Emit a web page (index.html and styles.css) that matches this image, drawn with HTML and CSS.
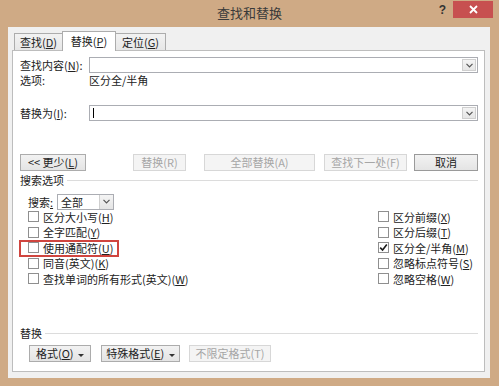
FILE: index.html
```html
<!DOCTYPE html>
<html>
<head>
    <meta charset="UTF-8">
    <title>查找和替换</title>
    <link rel="stylesheet" href="styles.css">
</head>
<body>
<div class="window">
    <div class="titlebar">
        <div></div>
        <div class="title">查找和替换</div>
        <div class="controls">
            <span class="help">?</span>
            <span class="close">
                <svg width="9" height="9" viewBox="0 0 9 9"><path d="M1 1 L8 8 M8 1 L1 8" stroke="#fff" stroke-width="1.8" fill="none"/></svg>
            </span>
        </div>
    </div>

    <div class="client">
        <div class="tabs">
            <div class="tab tab-find">查找(<u>D</u>)</div>
            <div class="tab tab-replace active">替换(<u>P</u>)</div>
            <div class="tab tab-goto">定位(<u>G</u>)</div>
        </div>

        <div class="panel">
            <div class="field-row">
                <span class="label">查找内容(<u>N</u>):</span>
                <div class="combo">
                    <span class="combo-arrow">
                        <svg width="7" height="5" viewBox="0 0 7 5"><path d="M0.5 0.8 L3.5 3.8 L6.5 0.8" stroke="#555" stroke-width="1.2" fill="none"/></svg>
                    </span>
                </div>
            </div>
            <div class="info-row">
                <span class="label">选项:</span>
                <span>区分全/半角</span>
            </div>
            <div class="field-row replace-row">
                <span class="label">替换为(<u>I</u>):</span>
                <div class="combo">
                    <span class="caret"></span>
                    <span class="combo-arrow">
                        <svg width="7" height="5" viewBox="0 0 7 5"><path d="M0.5 0.8 L3.5 3.8 L6.5 0.8" stroke="#555" stroke-width="1.2" fill="none"/></svg>
                    </span>
                </div>
            </div>

            <div class="button-row">
                <div class="btn btn-less">&lt;&lt; 更少(<u>L</u>)</div>
                <div class="btn disabled btn-replace">替换(R)</div>
                <div class="btn disabled btn-replace-all">全部替换(A)</div>
                <div class="btn disabled btn-next">查找下一处(F)</div>
                <div class="btn btn-cancel">取消</div>
            </div>

            <div class="group-head">
                <span>搜索选项</span>
                <span class="rule"></span>
            </div>

            <div class="search-row">
                <span>搜索<u>:</u></span>
                <div class="select">
                    <span class="select-text">全部</span>
                    <span class="select-arrow">
                        <svg width="7" height="5" viewBox="0 0 7 5"><path d="M0.5 0.8 L3.5 3.8 L6.5 0.8" stroke="#555" stroke-width="1.2" fill="none"/></svg>
                    </span>
                </div>
            </div>

            <div class="checks">
                <div class="check"><span class="box"></span>区分大小写(<u>H</u>)</div>
                <div class="check"><span class="box"></span>区分前缀(<u>X</u>)</div>
                <div class="check"><span class="box"></span>全字匹配(<u>Y</u>)</div>
                <div class="check"><span class="box"></span>区分后缀(<u>T</u>)</div>
                <div class="check marked"><span class="box"></span>使用通配符(<u>U</u>)</div>
                <div class="check"><span class="box checked"><svg width="9" height="9" viewBox="0 0 9 9"><path d="M1.2 4.6 L3.6 7 L7.8 1.6" stroke="#1a1a1a" stroke-width="1.6" fill="none"/></svg></span>区分全/半角(<u>M</u>)</div>
                <div class="check"><span class="box"></span>同音(英文)(<u>K</u>)</div>
                <div class="check"><span class="box"></span>忽略标点符号(<u>S</u>)</div>
                <div class="check"><span class="box"></span>查找单词的所有形式(英文)(<u>W</u>)</div>
                <div class="check"><span class="box"></span>忽略空格(<u>W</u>)</div>
            </div>

            <div class="bottom">
                <div class="group-head">
                    <span>替换</span>
                    <span class="rule"></span>
                </div>
                <div class="format-row">
                    <div class="btn btn-format">格式(<u>O</u>) <span class="drop"></span></div>
                    <div class="btn btn-special">特殊格式(<u>E</u>) <span class="drop"></span></div>
                    <div class="btn disabled btn-noformat">不限定格式(T)</div>
                </div>
            </div>
        </div>
    </div>
</div>
</body>
</html>
```

FILE: styles.css
```css
body {
    margin: 0;
    padding: 0;
    font-family: "Noto Sans CJK SC", "Liberation Sans", sans-serif;
    font-size: 11px;
    color: #222222;
}

.window {
    width: 499px;
    height: 386px;
    background-color: #CFAA85;
    display: flex;
    flex-direction: column;
}

/* title bar */
.titlebar {
    height: 27px;
    display: grid;
    grid-template-columns: 1fr auto 1fr;
    align-items: start;
}

.title {
    font-size: 13px;
    line-height: 26px;
    color: #3A3A3A;
}

.controls {
    justify-self: end;
    display: flex;
    align-items: flex-start;
    padding-right: 6px;
}

.help {
    font-family: "Liberation Sans", sans-serif;
    font-weight: bold;
    font-size: 12px;
    line-height: 20px;
    color: #333333;
    margin-right: 7px;
}

.close {
    width: 40px;
    height: 17px;
    margin-top: 1px;
    background-color: #C75050;
    display: flex;
    justify-content: center;
    align-items: center;
}

/* client area */
.client {
    flex: 1;
    margin: 0 9px 8px 8px;
    padding: 4px 5px 6px 4px;
    background-color: #F0F0F0;
    display: flex;
    flex-direction: column;
}

.tabs {
    display: flex;
    align-items: flex-end;
    height: 20px;
    padding-left: 2px;
    margin-bottom: -1px;
}

.tab {
    box-sizing: border-box;
    height: 18px;
    border: 1px solid #ACACAC;
    border-bottom: none;
    background: linear-gradient(#F2F2F2, #E6E6E6);
    line-height: 16px;
    text-align: center;
}

.tab-find { width: 48px; }
.tab-replace { width: 54px; }
.tab-goto { width: 50px; }

.tab.active {
    position: relative;
    z-index: 1;
    height: 20px;
    background: #FFFFFF;
    line-height: 18px;
}

.tab-goto {
    border-left: none;
}

.tab-find {
    border-right: none;
}

.panel {
    position: relative;
    flex: 1;
    background-color: #FFFFFF;
    border: 1px solid #BDBDBD;
    padding: 6px 6px 9px 7px;
    display: flex;
    flex-direction: column;
}

.label {
    width: 69px;
    flex-shrink: 0;
}

.field-row {
    display: flex;
    align-items: center;
    height: 16px;
}

.replace-row {
    margin-top: 18px;
}

.combo {
    flex: 1;
    box-sizing: border-box;
    height: 16px;
    border: 1px solid #ABADB3;
    background: #FFFFFF;
    display: flex;
    align-items: center;
    padding: 1px;
}

.combo-arrow {
    margin-left: auto;
    box-sizing: border-box;
    width: 14px;
    height: 12px;
    border: 1px solid #CFCFCF;
    background: linear-gradient(#F4F4F4, #E6E6E6);
    display: flex;
    justify-content: center;
    align-items: center;
}

.caret {
    width: 1px;
    height: 10px;
    margin-left: 2px;
    background: #000000;
}

.info-row {
    display: flex;
    height: 14px;
    line-height: 14px;
}

/* buttons */
.button-row {
    display: flex;
    margin-top: 33px;
}

.btn {
    box-sizing: border-box;
    height: 17px;
    border: 1px solid #ACACAC;
    background: linear-gradient(#F2F2F2, #E4E4E4);
    line-height: 15px;
    text-align: center;
    white-space: nowrap;
}

.btn.disabled {
    border-color: #D7D7D7;
    background: #F4F4F4;
    color: #A6A6A6;
}

.btn-less { width: 66px; }
.btn-replace { width: 53px; margin-left: 47px; }
.btn-replace-all { width: 111px; margin-left: 18px; }
.btn-next { width: 83px; margin-left: 9px; }
.btn-cancel { width: 64px; margin-left: auto; border-color: #9A9A9A; }

.group-head {
    display: flex;
    align-items: center;
    height: 14px;
    line-height: 14px;
    margin-top: 2px;
}

.rule {
    flex: 1;
    margin-left: 3px;
    border-top: 1px solid #DCDCDC;
}

.search-row {
    display: flex;
    align-items: center;
    height: 15px;
    margin-top: 7px;
    padding-left: 8px;
}

.select {
    box-sizing: border-box;
    width: 57px;
    height: 16px;
    margin-left: 4px;
    border: 1px solid #ABADB3;
    display: flex;
    align-items: stretch;
}

.select-text {
    flex: 1;
    padding-left: 3px;
    line-height: 14px;
}

.select-arrow {
    width: 13px;
    border-left: 1px solid #CFCFCF;
    background: linear-gradient(#F4F4F4, #E4E4E4);
    display: flex;
    justify-content: center;
    align-items: center;
}

/* check boxes */
.checks {
    display: grid;
    grid-template-columns: 350px auto;
    grid-auto-rows: 15.5px;
    padding-left: 8px;
}

.check {
    justify-self: start;
    display: flex;
    align-items: center;
    white-space: nowrap;
}

.box {
    box-sizing: border-box;
    width: 11px;
    height: 11px;
    margin-right: 4px;
    border: 1px solid #8F8F8F;
    background: #FFFFFF;
    display: flex;
    justify-content: center;
    align-items: center;
}

.marked {
    position: relative;
}

.marked::after {
    content: "";
    position: absolute;
    left: -9px;
    right: -6px;
    top: 0;
    bottom: -1px;
    border: 2px solid #D0453F;
}

/* replace group */
.bottom {
    margin-top: auto;
}

.format-row {
    display: flex;
    margin-top: 5px;
    padding-left: 9px;
}

.btn-format { width: 62px; }
.btn-special { width: 79px; margin-left: 10px; }
.btn-noformat { width: 82px; margin-left: 9px; }

.drop {
    display: inline-block;
    width: 0;
    height: 0;
    margin-left: 2px;
    vertical-align: middle;
    border-left: 3px solid transparent;
    border-right: 3px solid transparent;
    border-top: 3px solid #333333;
}
```
